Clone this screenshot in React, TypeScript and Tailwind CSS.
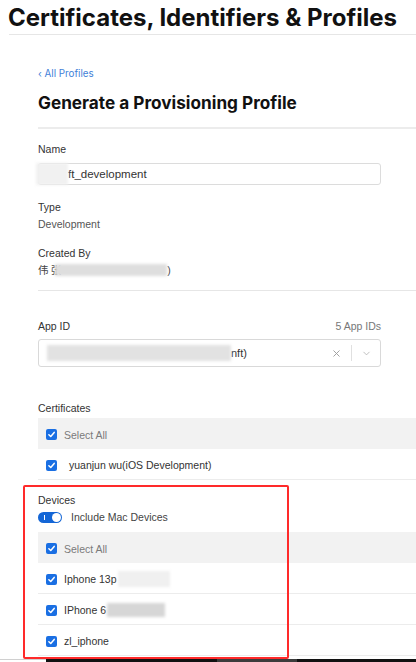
import { X, ChevronDown } from "lucide-react";

function Check() {
    return (
        <span className="flex h-[11px] w-[11px] shrink-0 items-center justify-center rounded-[2px] bg-[#1a6fe3]">
            <svg viewBox="0 0 12 12" className="h-[9px] w-[9px]">
                <path d="M2.5 6.3 L5 8.6 L9.6 3.2" fill="none" stroke="#fff" strokeWidth="2" strokeLinecap="round" strokeLinejoin="round" />
            </svg>
        </span>
    );
}

function Blur({ w, h, className = "" }: { w: string; h: string; className?: string }) {
    return <span className={`inline-block ${w} ${h} ${className} blur-[1.5px]`} />;
}

function SelectAllRow() {
    return (
        <div className="flex h-[31px] items-center gap-[7px] bg-[#f2f2f2] pl-[8px] pt-[2px] text-[#7a7a7a]">
            <Check />
            <span>Select All</span>
        </div>
    );
}

function ItemRow({ children, gap = "gap-[7px]" }: { children: React.ReactNode; gap?: string }) {
    return (
        <div className={`flex h-[31px] items-center ${gap} border-b border-[#ececec] pl-[8px] pt-[2px] text-[#333]`}>
            <Check />
            {children}
        </div>
    );
}

export default function App() {
    return (
        <div className="relative h-[662px] w-[416px] overflow-hidden bg-white font-['Inter',sans-serif] text-[10.5px] leading-[12px] text-[#333]">
            {/* page header */}
            <div className="h-[34px] pl-[8px] pt-[6px]">
                <h1 className="text-[24px] leading-[24px] font-bold text-[#111] whitespace-nowrap">
                    Certificates, Identifiers &amp; Profiles
                </h1>
            </div>
            <div className="ml-[9px] h-px bg-[#e6e6e6]" />

            <div className="pl-[38px] font-['Liberation_Sans',Arial,sans-serif]">
                <a className="mt-[33px] block font-['Inter',sans-serif] text-[9.8px] text-[#3f7fd8]">‹ All Profiles</a>
                <h2 className="mt-[12px] font-['Inter',sans-serif] text-[17.2px] leading-[22px] font-bold text-[#111]">
                    Generate a Provisioning Profile
                </h2>
                <div className="mt-[13px] h-[2px] bg-[#ececec]" />

                <div className="mt-[14px]">Name</div>
                <div className="relative mt-[8px] flex h-[22px] w-[343px] items-center rounded-[3px] border border-[#dcdcdc] text-[11.5px] text-[#333]">
                    <Blur w="w-[32px]" h="h-[22px]" className="-ml-[3px] bg-[#f1f1f1]" />
                    <span>ft_development</span>
                </div>

                <div className="mt-[16px]">Type</div>
                <div className="mt-[5px] text-[#555]">Development</div>

                <div className="mt-[17px]">Created By</div>
                <div className="mt-[5px] flex items-center text-[#444]">
                    <span className="font-['Noto_Sans_CJK_SC',sans-serif]">伟 张</span>
                    <Blur w="w-[112px]" h="h-[12px]" className="-ml-[6px] bg-[#dedede]" />
                    <span>)</span>
                </div>
                <div className="mt-[14px] h-px bg-[#e6e6e6]" />

                <div className="mt-[29px] flex w-[343px] items-center justify-between">
                    <span>App ID</span>
                    <span className="text-[#777]">5 App IDs</span>
                </div>
                <div className="mt-[7px] flex h-[28px] w-[343px] items-center rounded-[3px] border border-[#d9d9d9] pl-[8px] pr-[8px] text-[11px] text-[#333]">
                    <Blur w="w-[184px]" h="h-[16px]" className="bg-[#e2e2e2]" />
                    <span>nft)</span>
                    <span className="ml-auto flex items-center">
                        <X className="h-[11px] w-[11px] text-[#999]" strokeWidth={2} />
                        <span className="mx-[9px] h-[16px] w-px bg-[#e0e0e0]" />
                        <ChevronDown className="h-[11px] w-[11px] text-[#aaa]" strokeWidth={1.6} />
                    </span>
                </div>

                <div className="mt-[35px]">Certificates</div>
                <div className="mt-[4px]">
                    <SelectAllRow />
                    <ItemRow gap="gap-[12px]">
                        <span>yuanjun wu(iOS Development)</span>
                    </ItemRow>
                </div>

                <div className="mt-[14px]">Devices</div>
                <div className="mt-[5px] flex items-center gap-[9px]">
                    <span className="flex h-[11px] w-[24px] items-center justify-between rounded-full bg-[#1466d6] pl-[6px] pr-[1px]">
                        <span className="h-[5px] w-px bg-white" />
                        <span className="h-[9px] w-[9px] rounded-full bg-white" />
                    </span>
                    <span className="text-[#444]">Include Mac Devices</span>
                </div>
                <div className="mt-[9px]">
                    <SelectAllRow />
                    <ItemRow>
                        <span>Iphone 13p</span>
                        <Blur w="w-[52px]" h="h-[16px]" className="-ml-[6px] bg-[#f0f0f0]" />
                    </ItemRow>
                    <ItemRow>
                        <span>IPhone 6</span>
                        <Blur w="w-[58px]" h="h-[14px]" className="-ml-[6px] bg-[#d6d6d6]" />
                    </ItemRow>
                    <ItemRow>
                        <span>zl_iphone</span>
                    </ItemRow>
                </div>
            </div>

            {/* cut-off footer */}
            <div className="mt-[3px] flex h-[3px]">
                <div className="w-[46px] border-t border-[#d0d0d0]" />
                <div className="flex flex-1 bg-[#111]">
                    <div className="ml-[171px] w-[80px] bg-[#3c3c3c]" />
                </div>
            </div>

            {/* annotation box */}
            <div className="absolute left-[23px] top-[485px] h-[174px] w-[266px] rounded-[2px] border-2 border-[#ff2a2a]" />
        </div>
    );
}
